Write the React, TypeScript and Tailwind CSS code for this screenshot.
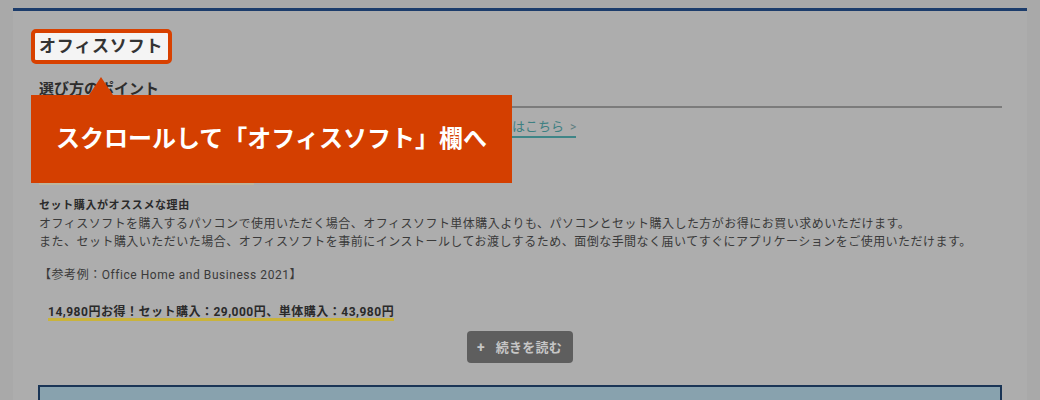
export default function App() {
  return (
    <div
      className="relative w-[1040px] h-[400px] overflow-hidden bg-[#a9a9a9]"
      style={{ fontFamily: 'Roboto, "Noto Sans CJK JP", sans-serif' }}
    >
      <div className="mx-[13px] mt-[8px] h-[392px] bg-[#adadad] border-t-[3px] border-[#1c3c6b]">
        {/* Highlighted category label */}
        <div className="pl-[18px] pt-[18px]">
          <div className="relative z-10 inline-flex h-[35px] w-[141px] items-center rounded-[5px] border-[4px] border-[#d84100] bg-[#f4f4f4] pl-[4px]">
            <span className="text-[17px] font-bold leading-none tracking-[0.8px] text-[#333]">
              オフィスソフト
            </span>
          </div>
        </div>

        {/* Section heading */}
        <div className="ml-[18px] mr-[25px] mt-[14px] border-b-[2px] border-[#7b7b7b] pb-[6px] pl-[8px]">
          <h2 className="text-[15px] font-bold leading-[22px] text-[#2e2e2e]">選び方のポイント</h2>
        </div>

        <div className="ml-[26px] mr-[25px]">
          <div className="mt-[10px] flex h-[20px] items-center pl-[473px]">
            <span className="border-b-[2px] border-[#3f8587] text-[13px] leading-[17px] text-[#3e8082]">
              はこちら<span className="ml-[6px] text-[12px] text-[#5f7f80]">&gt;</span>
            </span>
          </div>
          <div className="mt-[45px] h-[2px] w-[215px] bg-[#bdb69e]" />

          {/* Reason text */}
          <div className="mt-[12px] text-[12px] leading-[18px] tracking-[0.48px] text-[#3a3a3a]">
            <p className="text-[11px] font-bold tracking-[0.6px] text-[#2a2a2a]">セット購入がオススメな理由</p>
            <p>
              オフィスソフトを購入するパソコンで使用いただく場合、オフィスソフト単体購入よりも、パソコンとセット購入した方がお得にお買い求めいただけます。
            </p>
            <p>
              また、セット購入いただいた場合、オフィスソフトを事前にインストールしてお渡しするため、面倒な手間なく届いてすぐにアプリケーションをご使用いただけます。
            </p>
            <p className="mt-[15px] tracking-[0.55px]">【参考例：Office Home and Business 2021】</p>
            <p className="mt-[19px] pl-[9px]">
              <span className="inline-block border-b-[3px] border-[#c9b33c] font-bold leading-[12px] tracking-[0.5px] text-[#2a2a2a]">
                14,980円お得！セット購入：29,000円、単体購入：43,980円
              </span>
            </p>
          </div>
        </div>

        {/* Read more */}
        <div className="mt-[10px] flex justify-center">
          <button className="flex h-[32px] w-[106px] items-center rounded-[4px] bg-[#5e5e5e] pl-[10px] text-[#c6c6c6]">
            <span className="text-[14px] font-bold leading-none">+</span>
            <span className="ml-[11px] text-[13px] font-bold leading-none tracking-[0.3px]">続きを読む</span>
          </button>
        </div>

        {/* Next section box */}
        <div className="ml-[25px] mr-[25px] mt-[22px] h-[40px] border-[2px] border-[#1a3556] bg-[#88a2ae]" />
      </div>

      {/* Callout */}
      <div className="absolute left-[31px] top-[95px] z-20 flex h-[88px] w-[481px] items-center justify-center bg-[#d43f00]">
        <div className="absolute left-[58px] top-[-18px] h-0 w-0 border-x-[12px] border-b-[18px] border-x-transparent border-b-[#d43f00]" />
        <span className="text-[24px] font-bold leading-none text-white">スクロールして「オフィスソフト」欄へ</span>
      </div>
    </div>
  );
}
